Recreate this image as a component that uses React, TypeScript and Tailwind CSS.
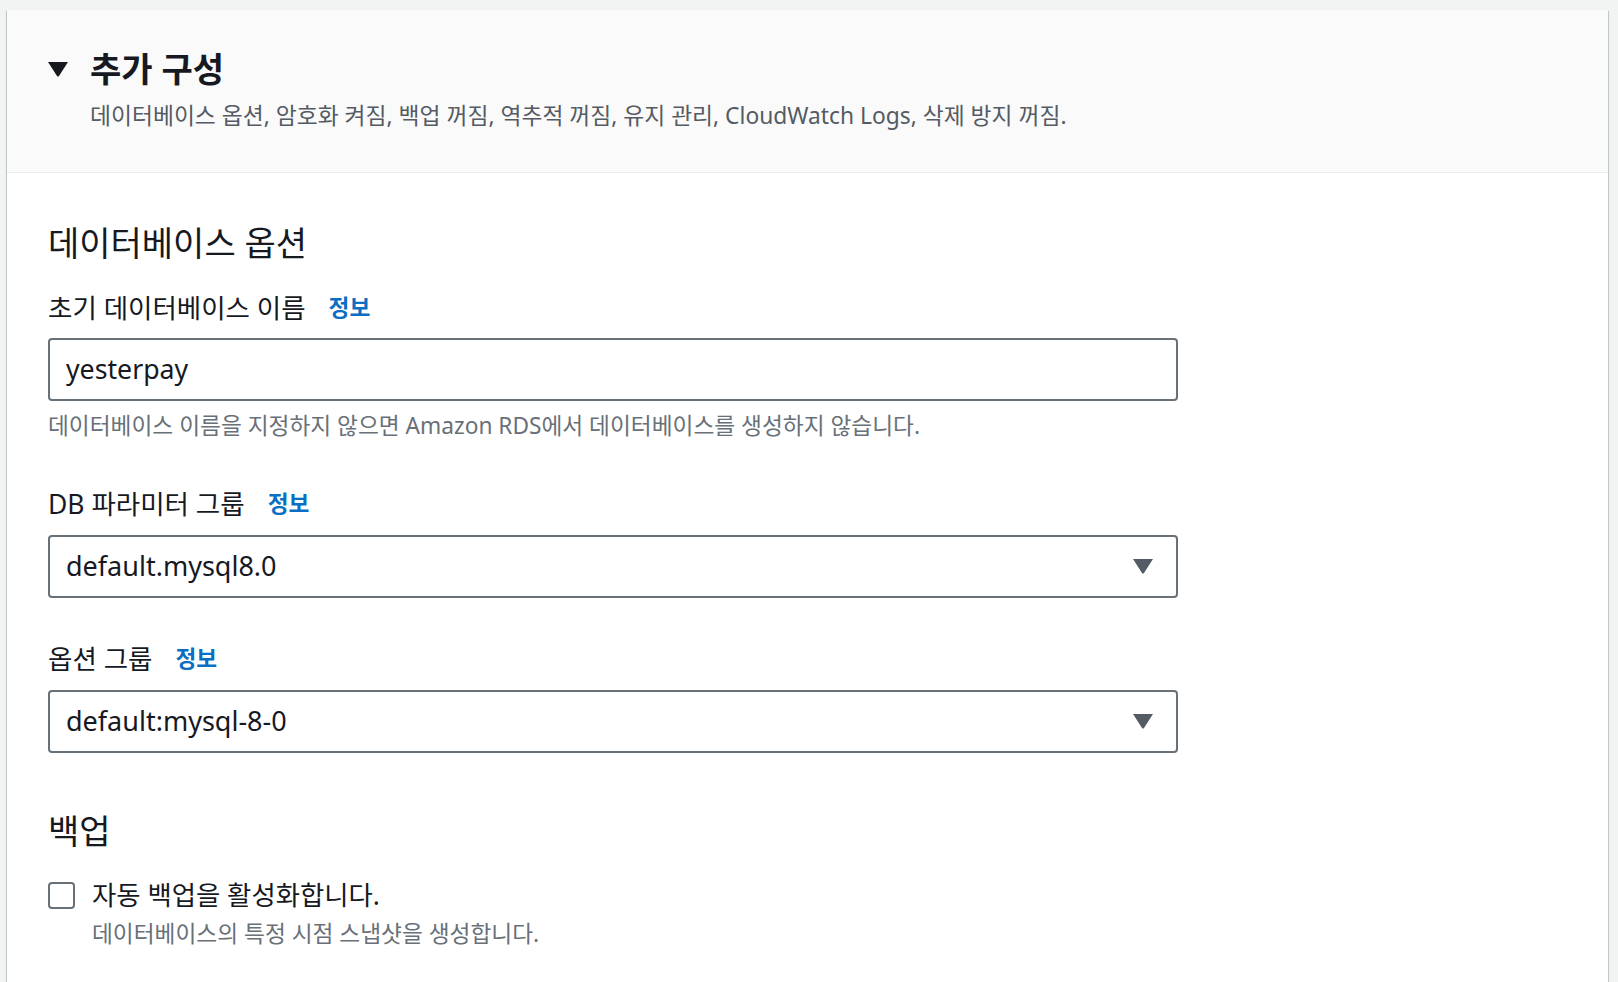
const font = "font-['Noto_Sans','Noto_Sans_CJK_KR',sans-serif]";

function InfoLink() {
  return <a className="ml-[23px] text-[22.7px] font-bold text-[#0a6fc2]">정보</a>;
}

function Caret({ className }: { className: string }) {
  return (
    <svg viewBox="0 0 20 15" className={className}>
      <path d="M0 0 H20 L11 14 Q10 15 9 14 Z" fill="currentColor" />
    </svg>
  );
}

function SelectBox({ value }: { value: string }) {
  return (
    <div className="flex h-[63px] w-[1130px] items-center justify-between rounded-[4px] border-2 border-[#687078] bg-white pl-[16px] pr-[23px]">
      <span className="text-[27px] text-[#16191f]">{value}</span>
      <Caret className="h-[15px] w-[20px] text-[#545b64]" />
    </div>
  );
}

export default function App() {
  return (
    <div className={`min-h-screen bg-[#f2f3f3] pl-[7px] pr-[10px] pt-[10px] ${font}`}>
      <div className="min-h-[972px] bg-white shadow-[0_1px_1px_0_rgba(0,28,36,0.3),1px_1px_1px_0_rgba(0,28,36,0.15),-1px_1px_1px_0_rgba(0,28,36,0.15)]">
        <div className="border-b border-[#eaeded] bg-[#fafafa] pb-[42px] pl-[41px] pt-[39px]">
          <div className="flex items-center">
            <Caret className="h-[17px] w-[20px] text-[#16191f]" />
            <h2 className="ml-[22px] text-[34px] font-bold leading-[40px] text-[#16191f]">추가 구성</h2>
          </div>
          <p className="ml-[42px] mt-[13px] text-[22.8px] leading-[28px] text-[#545b64]">
            데이터베이스 옵션, 암호화 켜짐, 백업 꺼짐, 역추적 꺼짐, 유지 관리, CloudWatch Logs, 삭제 방지 꺼짐.
          </p>
        </div>

        <div className="flex flex-col pl-[41px] pt-[50px] text-[#16191f]">
          <h3 className="text-[34px] leading-[40px]">데이터베이스 옵션</h3>

          <div className="mt-[30px] flex items-center text-[26.5px] leading-[30px]">
            초기 데이터베이스 이름 <InfoLink />
          </div>
          <div className="mt-[15px] flex h-[63px] w-[1130px] items-center rounded-[4px] border-2 border-[#687078] pl-[16px]">
            <span className="text-[26.7px]">yesterpay</span>
          </div>
          <p className="mt-[11px] text-[22.7px] leading-[28px] text-[#687078]">
            데이터베이스 이름을 지정하지 않으면 Amazon RDS에서 데이터베이스를 생성하지 않습니다.
          </p>

          <div className="mt-[49px] flex items-center text-[26.5px] leading-[30px]">
            DB 파라미터 그룹 <InfoLink />
          </div>
          <div className="mt-[16px]">
            <SelectBox value="default.mysql8.0" />
          </div>

          <div className="mt-[46px] flex items-center text-[26.5px] leading-[30px]">
            옵션 그룹 <InfoLink />
          </div>
          <div className="mt-[16px]">
            <SelectBox value="default:mysql-8-0" />
          </div>

          <h3 className="mt-[58px] text-[34px] leading-[40px]">백업</h3>

          <div className="mt-[29px] flex items-start">
            <div className="mt-[2px] h-[27px] w-[27px] rounded-[4px] border-2 border-[#687078]" />
            <div className="ml-[17px] flex flex-col">
              <span className="text-[26.4px] leading-[30px]">자동 백업을 활성화합니다.</span>
              <span className="mt-[10px] text-[22.7px] leading-[28px] text-[#687078]">
                데이터베이스의 특정 시점 스냅샷을 생성합니다.
              </span>
            </div>
          </div>
        </div>
      </div>
    </div>
  );
}
